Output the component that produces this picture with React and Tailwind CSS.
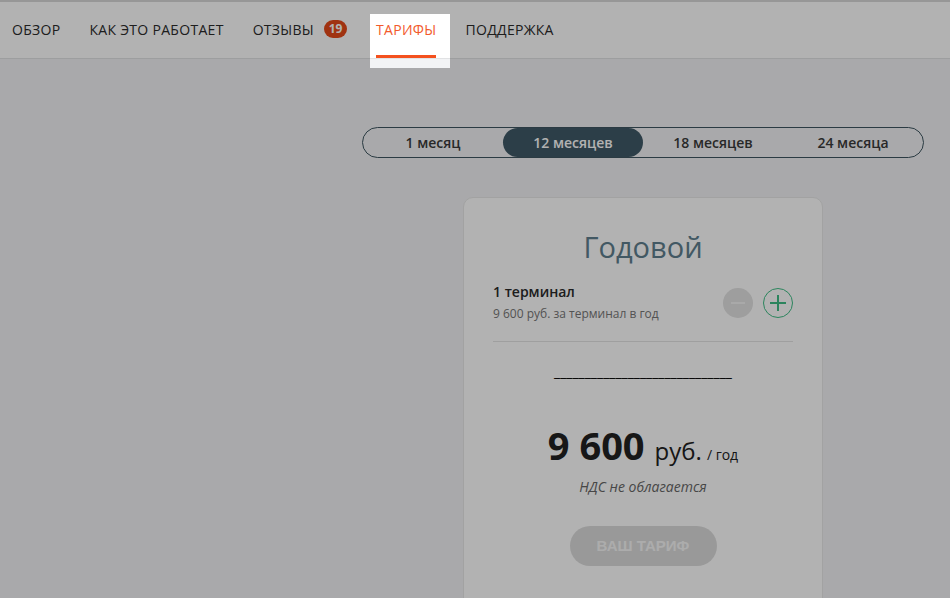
import { useState } from 'react'

const TABS = ['ОБЗОР', 'КАК ЭТО РАБОТАЕТ', 'ОТЗЫВЫ', 'ТАРИФЫ', 'ПОДДЕРЖКА']
const PERIODS = ['1 месяц', '12 месяцев', '18 месяцев', '24 месяца']

export default function App() {
  const [period, setPeriod] = useState(1)
  const [count, setCount] = useState(1)

  return (
    <div className="relative min-h-[598px] bg-[#f2f3f5] font-['Open_Sans',sans-serif] text-[#222] overflow-hidden">
      <nav className="h-[59px] bg-white border-t-2 border-[#d8d8d8] border-b border-b-[#e1e2e4] flex items-start pl-3">
        {TABS.map((t, i) => (
          <div key={t} className={`relative h-[56px] flex items-start pt-[17px] text-[14px] ${i === 0 ? '' : 'ml-[29px]'} ${i === 3 ? 'text-[#f25a2c]' : 'text-[#2b2b2b]'}`}>
            <span className="tracking-[0.3px]">{t}</span>
            {i === 2 && <span className="ml-[10px] mt-[1px] h-[18px] min-w-[23px] px-1 rounded-full bg-[#e64a19] text-white text-[12px] font-bold leading-[18px] text-center">19</span>}
            {i === 3 && <span className="absolute left-0 right-0 bottom-0 h-[3px] bg-[#f4511e]" />}
          </div>
        ))}
      </nav>

      <div className="flex">
        <div className="w-[336px] shrink-0" />
        <div className="flex-1 flex flex-col items-center pt-[68px]">
          <div className="w-[562px] h-[31px] rounded-full border border-[#3e5560] flex">
            {PERIODS.map((p, i) => (
              <button key={p} onClick={() => setPeriod(i)} className={`flex-1 rounded-full text-[14px] font-semibold ${period === i ? 'bg-[#405a67] text-white' : 'text-[#3a3a3a]'}`}>{p}</button>
            ))}
          </div>

          <div className="mt-[39px] w-[360px] h-[420px] bg-white rounded-[10px] border border-[#e8e8e8] px-[29px] pt-[30px]">
            <h2 className="text-center text-[29px] leading-[38px] text-[#5f7f8e]">Годовой</h2>
            <div className="mt-[16px] flex items-center justify-between pb-[18px] border-b border-[#e4e4e4]">
              <div>
                <div className="text-[14px] font-semibold leading-[20px] text-[#2a2a2a]">{count} терминал</div>
                <div className="mt-[3px] text-[12px] leading-[18px] text-[#777]">9 600 руб. за терминал в год</div>
              </div>
              <div className="flex gap-[10px]">
                <button onClick={() => setCount(c => Math.max(1, c - 1))} className="w-[30px] h-[30px] rounded-full bg-[#e2e2e2] flex items-center justify-center">
                  <span className="block w-[14px] h-[2px] bg-[#f2f2f2]" />
                </button>
                <button onClick={() => setCount(c => c + 1)} className="relative w-[30px] h-[30px] rounded-full border border-[#3fbe86] flex items-center justify-center">
                  <span className="absolute w-[16px] h-[2px] bg-[#3fbe86]" />
                  <span className="absolute w-[2px] h-[16px] bg-[#3fbe86]" />
                </button>
              </div>
            </div>
            <div className="mt-[20px] text-center text-[14px] text-black leading-[20px]">_____________________________</div>
            <div className="mt-[40px] flex items-baseline justify-center">
              <span className="text-[38px] font-bold leading-[46px] text-[#222]">9 600</span>
              <span className="ml-[10px] text-[24px] text-[#222]">руб.</span>
              <span className="ml-[5px] text-[14px] text-[#222]">/ год</span>
            </div>
            <div className="mt-[7px] text-center text-[14px] italic text-[#666]">НДС не облагается</div>
            <div className="mt-[29px] flex justify-center">
              <button className="w-[147px] h-[40px] rounded-full bg-[#dcdcdc] text-[#f7f7f7] text-[15px] font-bold font-['Liberation_Sans',sans-serif]">ВАШ ТАРИФ</button>
            </div>
          </div>
        </div>
      </div>

      <div className="absolute left-[370px] top-[14px] w-[80px] h-[54px] pointer-events-none shadow-[0_0_0_3000px_rgba(0,0,0,0.3)]" />
    </div>
  )
}
